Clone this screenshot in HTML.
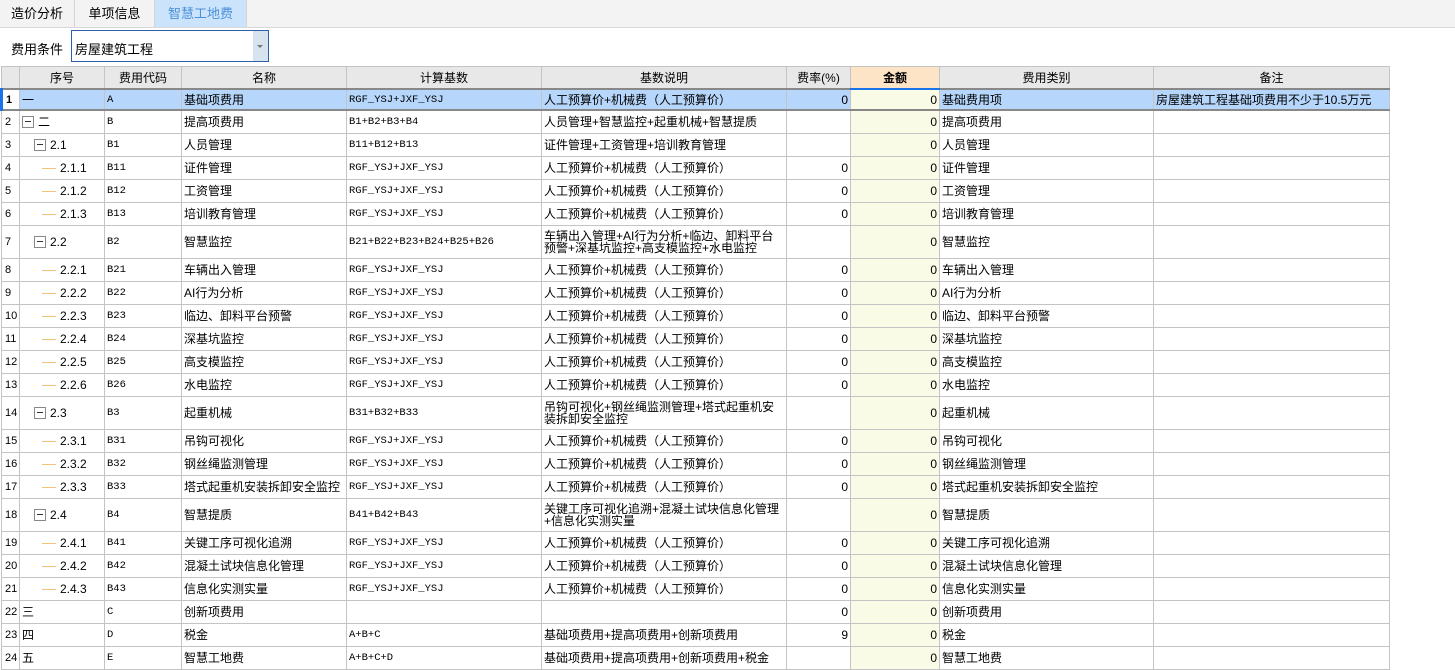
<!DOCTYPE html>
<html><head><meta charset="utf-8"><style>
body{margin:0;width:1455px;height:655px;overflow:hidden;background:#fff;font-family:"Liberation Sans","Noto Sans CJK SC",sans-serif;font-size:12px;color:#000;position:relative}
.tabs{position:absolute;left:0;top:0;height:27px;width:1455px;background:#f3f3f3;border-bottom:1px solid #d8d8d8}
.tab{position:absolute;top:0;height:27px;line-height:28px;text-align:center;font-size:13px;border-right:1px solid #d4d4d4}
.cond{position:absolute;left:11px;top:39px;font-size:13px}
.sel{position:absolute;left:71px;top:30px;width:198px;height:32px;border:1px solid #2e5fa8;box-sizing:border-box;background:#fff}
.sel span{position:absolute;left:3px;top:8px;font-size:13px}
.sel i{position:absolute;right:0;top:0;width:15px;height:30px;background:#d8e3f0}
.sel i:after{content:"";position:absolute;left:4px;top:14px;border:3px solid transparent;border-top:3px solid #777}
table{position:absolute;left:0;top:66px;border-collapse:collapse;table-layout:fixed;width:1389px}
td,th{border:1px solid #c4c4c4;padding:0 2px;height:22px;line-height:14px;vertical-align:middle;white-space:nowrap;overflow:hidden;font-weight:normal}
th{background:#e8e8e8;height:21px;font-size:12px}
th.am{background:#fde4c6;border-bottom:2px solid #1a73e8;font-weight:bold;height:20px}
td.n{text-align:left;padding-left:3px;font-size:11px}
td.m{font-family:"Liberation Mono",monospace;font-size:10.5px}
td.r{text-align:right}
td.y{background:#fafbe6;text-align:right}
tr.t td{height:32px;line-height:12px;white-space:normal}
tr.s td{background:#b6d6fb;border-top:2px solid #888;border-bottom:2px solid #888;height:19px}
tr.s td.y{background:#fafbe6}
.bx{display:inline-block;width:10px;height:10px;border:1px solid #888;vertical-align:-2px;position:relative;margin-right:4px;background:#fff}
.bx:after{content:"";position:absolute;left:2px;top:4px;width:6px;height:1px;background:#333}
.ln{display:inline-block;width:14px;height:1px;background:#f5c27a;vertical-align:3px;margin-right:4px}
.i1{padding-left:14px}.i2{padding-left:22px}
</style></head><body>
<div class="tabs">
<div class="tab" style="left:0;width:74px">造价分析</div>
<div class="tab" style="left:75px;width:79px">单项信息</div>
<div class="tab" style="left:155px;width:91px;background:#cce4fb;color:#4a90d9">智慧工地费</div>
</div>
<div class="cond">费用条件</div>
<div class="sel"><span>房屋建筑工程</span><i></i></div>
<table>
<colgroup><col style="width:18px"><col style="width:85px"><col style="width:77px"><col style="width:165px"><col style="width:195px"><col style="width:245px"><col style="width:64px"><col style="width:89px"><col style="width:214px"><col style="width:236px"></colgroup>
<tr><th></th><th>序号</th><th>费用代码</th><th>名称</th><th>计算基数</th><th>基数说明</th><th>费率(%)</th><th class="am">金额</th><th>费用类别</th><th>备注</th></tr>
<tr class="s"><td class="n" style="font-weight:bold;border-left:3px solid #1a73e8;background:#fff">1</td><td>一</td><td class="m">A</td><td>基础项费用</td><td class="m">RGF_YSJ+JXF_YSJ</td><td>人工预算价+机械费（人工预算价）</td><td class="r">0</td><td class="y">0</td><td>基础费用项</td><td>房屋建筑工程基础项费用不少于10.5万元</td></tr>
<tr><td class="n">2</td><td><span class="bx"></span>二</td><td class="m">B</td><td>提高项费用</td><td class="m">B1+B2+B3+B4</td><td>人员管理+智慧监控+起重机械+智慧提质</td><td></td><td class="y">0</td><td>提高项费用</td><td></td></tr>
<tr><td class="n">3</td><td class="i1"><span class="bx"></span>2.1</td><td class="m">B1</td><td>人员管理</td><td class="m">B11+B12+B13</td><td>证件管理+工资管理+培训教育管理</td><td></td><td class="y">0</td><td>人员管理</td><td></td></tr>
<tr><td class="n">4</td><td class="i2"><span class="ln"></span>2.1.1</td><td class="m">B11</td><td>证件管理</td><td class="m">RGF_YSJ+JXF_YSJ</td><td>人工预算价+机械费（人工预算价）</td><td class="r">0</td><td class="y">0</td><td>证件管理</td><td></td></tr>
<tr><td class="n">5</td><td class="i2"><span class="ln"></span>2.1.2</td><td class="m">B12</td><td>工资管理</td><td class="m">RGF_YSJ+JXF_YSJ</td><td>人工预算价+机械费（人工预算价）</td><td class="r">0</td><td class="y">0</td><td>工资管理</td><td></td></tr>
<tr><td class="n">6</td><td class="i2"><span class="ln"></span>2.1.3</td><td class="m">B13</td><td>培训教育管理</td><td class="m">RGF_YSJ+JXF_YSJ</td><td>人工预算价+机械费（人工预算价）</td><td class="r">0</td><td class="y">0</td><td>培训教育管理</td><td></td></tr>
<tr class="t"><td class="n">7</td><td class="i1"><span class="bx"></span>2.2</td><td class="m">B2</td><td>智慧监控</td><td class="m">B21+B22+B23+B24+B25+B26</td><td>车辆出入管理+AI行为分析+临边、卸料平台预警+深基坑监控+高支模监控+水电监控</td><td></td><td class="y">0</td><td>智慧监控</td><td></td></tr>
<tr><td class="n">8</td><td class="i2"><span class="ln"></span>2.2.1</td><td class="m">B21</td><td>车辆出入管理</td><td class="m">RGF_YSJ+JXF_YSJ</td><td>人工预算价+机械费（人工预算价）</td><td class="r">0</td><td class="y">0</td><td>车辆出入管理</td><td></td></tr>
<tr><td class="n">9</td><td class="i2"><span class="ln"></span>2.2.2</td><td class="m">B22</td><td>AI行为分析</td><td class="m">RGF_YSJ+JXF_YSJ</td><td>人工预算价+机械费（人工预算价）</td><td class="r">0</td><td class="y">0</td><td>AI行为分析</td><td></td></tr>
<tr><td class="n">10</td><td class="i2"><span class="ln"></span>2.2.3</td><td class="m">B23</td><td>临边、卸料平台预警</td><td class="m">RGF_YSJ+JXF_YSJ</td><td>人工预算价+机械费（人工预算价）</td><td class="r">0</td><td class="y">0</td><td>临边、卸料平台预警</td><td></td></tr>
<tr><td class="n">11</td><td class="i2"><span class="ln"></span>2.2.4</td><td class="m">B24</td><td>深基坑监控</td><td class="m">RGF_YSJ+JXF_YSJ</td><td>人工预算价+机械费（人工预算价）</td><td class="r">0</td><td class="y">0</td><td>深基坑监控</td><td></td></tr>
<tr><td class="n">12</td><td class="i2"><span class="ln"></span>2.2.5</td><td class="m">B25</td><td>高支模监控</td><td class="m">RGF_YSJ+JXF_YSJ</td><td>人工预算价+机械费（人工预算价）</td><td class="r">0</td><td class="y">0</td><td>高支模监控</td><td></td></tr>
<tr><td class="n">13</td><td class="i2"><span class="ln"></span>2.2.6</td><td class="m">B26</td><td>水电监控</td><td class="m">RGF_YSJ+JXF_YSJ</td><td>人工预算价+机械费（人工预算价）</td><td class="r">0</td><td class="y">0</td><td>水电监控</td><td></td></tr>
<tr class="t"><td class="n">14</td><td class="i1"><span class="bx"></span>2.3</td><td class="m">B3</td><td>起重机械</td><td class="m">B31+B32+B33</td><td>吊钩可视化+钢丝绳监测管理+塔式起重机安装拆卸安全监控</td><td></td><td class="y">0</td><td>起重机械</td><td></td></tr>
<tr><td class="n">15</td><td class="i2"><span class="ln"></span>2.3.1</td><td class="m">B31</td><td>吊钩可视化</td><td class="m">RGF_YSJ+JXF_YSJ</td><td>人工预算价+机械费（人工预算价）</td><td class="r">0</td><td class="y">0</td><td>吊钩可视化</td><td></td></tr>
<tr><td class="n">16</td><td class="i2"><span class="ln"></span>2.3.2</td><td class="m">B32</td><td>钢丝绳监测管理</td><td class="m">RGF_YSJ+JXF_YSJ</td><td>人工预算价+机械费（人工预算价）</td><td class="r">0</td><td class="y">0</td><td>钢丝绳监测管理</td><td></td></tr>
<tr><td class="n">17</td><td class="i2"><span class="ln"></span>2.3.3</td><td class="m">B33</td><td>塔式起重机安装拆卸安全监控</td><td class="m">RGF_YSJ+JXF_YSJ</td><td>人工预算价+机械费（人工预算价）</td><td class="r">0</td><td class="y">0</td><td>塔式起重机安装拆卸安全监控</td><td></td></tr>
<tr class="t"><td class="n">18</td><td class="i1"><span class="bx"></span>2.4</td><td class="m">B4</td><td>智慧提质</td><td class="m">B41+B42+B43</td><td>关键工序可视化追溯+混凝土试块信息化管理+信息化实测实量</td><td></td><td class="y">0</td><td>智慧提质</td><td></td></tr>
<tr><td class="n">19</td><td class="i2"><span class="ln"></span>2.4.1</td><td class="m">B41</td><td>关键工序可视化追溯</td><td class="m">RGF_YSJ+JXF_YSJ</td><td>人工预算价+机械费（人工预算价）</td><td class="r">0</td><td class="y">0</td><td>关键工序可视化追溯</td><td></td></tr>
<tr><td class="n">20</td><td class="i2"><span class="ln"></span>2.4.2</td><td class="m">B42</td><td>混凝土试块信息化管理</td><td class="m">RGF_YSJ+JXF_YSJ</td><td>人工预算价+机械费（人工预算价）</td><td class="r">0</td><td class="y">0</td><td>混凝土试块信息化管理</td><td></td></tr>
<tr><td class="n">21</td><td class="i2"><span class="ln"></span>2.4.3</td><td class="m">B43</td><td>信息化实测实量</td><td class="m">RGF_YSJ+JXF_YSJ</td><td>人工预算价+机械费（人工预算价）</td><td class="r">0</td><td class="y">0</td><td>信息化实测实量</td><td></td></tr>
<tr><td class="n">22</td><td>三</td><td class="m">C</td><td>创新项费用</td><td class="m"></td><td></td><td class="r">0</td><td class="y">0</td><td>创新项费用</td><td></td></tr>
<tr><td class="n">23</td><td>四</td><td class="m">D</td><td>税金</td><td class="m">A+B+C</td><td>基础项费用+提高项费用+创新项费用</td><td class="r">9</td><td class="y">0</td><td>税金</td><td></td></tr>
<tr><td class="n">24</td><td>五</td><td class="m">E</td><td>智慧工地费</td><td class="m">A+B+C+D</td><td>基础项费用+提高项费用+创新项费用+税金</td><td></td><td class="y">0</td><td>智慧工地费</td><td></td></tr>
</table>
</body></html>
